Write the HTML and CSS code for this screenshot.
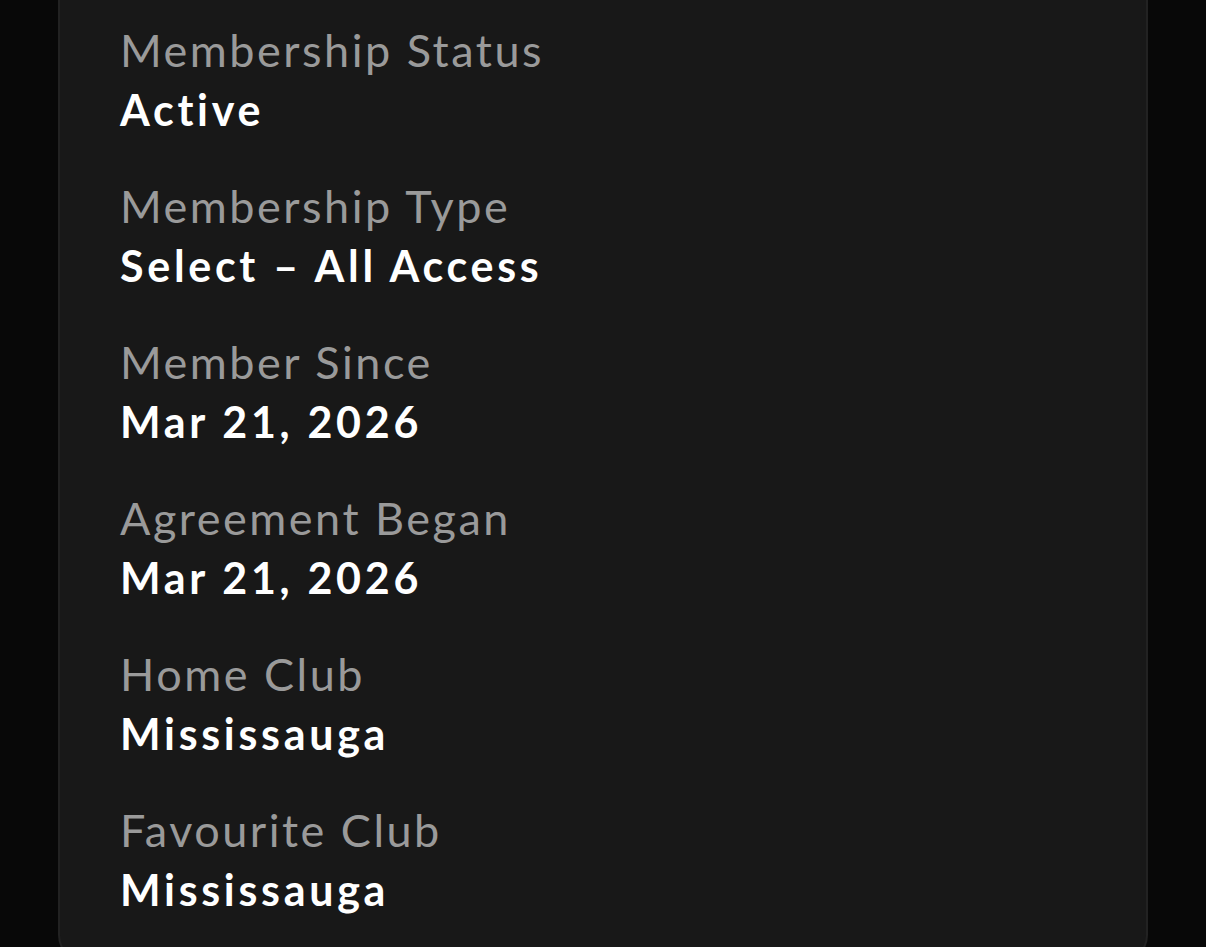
FILE: index.html
```html
<!DOCTYPE html>
<html lang="en">
<head>
<meta charset="utf-8">
<title>Membership</title>
<link rel="stylesheet" href="styles.css">
</head>
<body>
<main class="page">
  <section class="card">
    <dl class="details">
      <div class="item">
        <dt class="label">Membership Status</dt>
        <dd class="value">Active</dd>
      </div>
      <div class="item">
        <dt class="label">Membership Type</dt>
        <dd class="value">Select – All Access</dd>
      </div>
      <div class="item">
        <dt class="label">Member Since</dt>
        <dd class="value">Mar 21, 2026</dd>
      </div>
      <div class="item">
        <dt class="label">Agreement Began</dt>
        <dd class="value">Mar 21, 2026</dd>
      </div>
      <div class="item">
        <dt class="label">Home Club</dt>
        <dd class="value">Mississauga</dd>
      </div>
      <div class="item">
        <dt class="label">Favourite Club</dt>
        <dd class="value">Mississauga</dd>
      </div>
    </dl>
  </section>
</main>
</body>
</html>
```
FILE: styles.css
```css
html, body {
  margin: 0;
  padding: 0;
  background: #080808;
  height: 100%;
  overflow: hidden;
}
body {
  font-family: "Lato", "Noto Sans", sans-serif;
  -webkit-font-smoothing: antialiased;
}
.page {
  padding: 0 58px;
}
.card {
  margin-top: -40px;
  background: #181818;
  border: 2px solid #222222;
  border-radius: 0 0 28px 28px;
  padding: 60px 60px 40px;
}
.details {
  margin: 0;
  display: flex;
  flex-direction: column;
  gap: 37px;
}
.item {
  display: flex;
  flex-direction: column;
}
.label {
  color: #9a9a9a;
  font-size: 45px;
  line-height: 57px;
  font-weight: 400;
  letter-spacing: 2.5px;
}
.value {
  margin: 0;
  color: #ffffff;
  font-size: 43px;
  line-height: 62px;
  font-weight: 700;
  letter-spacing: 3.7px;
}
```
